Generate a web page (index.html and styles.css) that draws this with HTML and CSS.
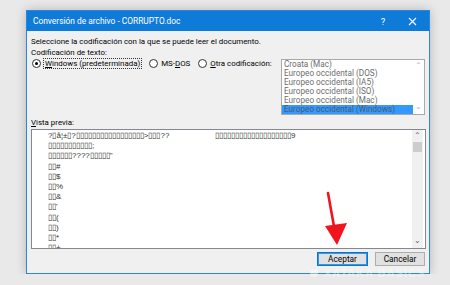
FILE: index.html
```html
<!DOCTYPE html>
<html lang="es">
<head>
	<meta charset="UTF-8">
	<title>Conversión de archivo</title>
	<link rel="stylesheet" href="styles.css">
</head>
<body>
<div class="dialog">
	<div class="titlebar">
		<span class="title">Conversión de archivo - CORRUPTO.doc</span>
		<span class="help">?</span>
		<span class="close">
			<svg width="9" height="9" viewBox="0 0 9 9"><path d="M1 1L8 8M8 1L1 8" stroke="#fff" stroke-width="1.1"/></svg>
		</span>
	</div>
	<div class="content">
		<p class="line">Seleccione la codificación con la que se puede leer el documento.</p>
		<p class="line">Codificación de texto:</p>
		<div class="encoding">
			<div class="options">
				<label class="radio"><span class="dot checked"></span><span class="focus"><u>W</u>indows (predeterminada)</span></label>
				<label class="radio"><span class="dot"></span>MS-<u>D</u>OS</label>
				<label class="radio"><span class="dot"></span><u>O</u>tra codificación:</label>
			</div>
			<div class="listbox">
				<ul>
					<li>Croata (Mac)</li>
					<li>Europeo occidental (DOS)</li>
					<li>Europeo occidental (IA5)</li>
					<li>Europeo occidental (ISO)</li>
					<li>Europeo occidental (Mac)</li>
					<li class="selected">Europeo occidental (Windows)</li>
				</ul>
				<div class="scroll small">
					<span class="arrow">&#8963;</span>
					<span class="arrow down">&#8964;</span>
				</div>
			</div>
		</div>
		<p class="line label"><u>V</u>ista previa:</p>
		<div class="preview">
			<div class="text">
				<div><span class="w1">?▯å¦±▯?▯▯▯▯▯▯▯▯▯▯▯▯▯▯▯▯▯>▯▯▯??</span>▯▯▯▯▯▯▯▯▯▯▯▯▯▯▯▯▯▯▯9</div>
				<div>▯▯▯▯▯▯▯▯▯▯▯;</div>
				<div>▯▯▯▯▯▯????▯▯▯▯▯"</div>
				<div>▯▯#</div>
				<div>▯▯$</div>
				<div>▯▯%</div>
				<div>▯▯&amp;</div>
				<div>▯▯'</div>
				<div>▯▯(</div>
				<div>▯▯)</div>
				<div>▯▯*</div>
				<div>▯▯+</div>
			</div>
			<div class="scroll">
				<span class="arrow">&#8963;</span>
				<span class="thumb"></span>
				<span class="arrow down">&#8964;</span>
			</div>
		</div>
		<div class="buttons">
			<button class="btn default">Aceptar</button>
			<button class="btn">Cancelar</button>
		</div>
	</div>
</div>
<svg class="pointer" width="30" height="60" viewBox="0 0 30 60">
	<path d="M8 3L15 42" stroke="#f0141e" stroke-width="2.6" stroke-linecap="round"/>
	<path d="M5 36L17 55L27 33Z" fill="#f0141e"/>
</svg>
<div class="watermark"><span class="logo"></span>XATAKA BASICS</div>
</body>
</html>
```
FILE: styles.css
```css
body{
	margin: 0;
	background: #e9e9e9;
	font-family: Roboto, sans-serif;
	font-size: 7.9px;
	color: #000;
}
.dialog{
	width: 402px;
	margin: 10px 0 0 26px;
	border: 1px solid #2b86d8;
	background: #f0f0f0;
	box-shadow: 0 0 10px rgba(0,0,0,0.22);
}
.titlebar{
	display: flex;
	align-items: center;
	height: 20px;
	background: #0f7bd8;
	color: #fff;
	font-size: 8.4px;
}
.title{
	flex: 1;
	padding-left: 6px;
}
.help{
	width: 28px;
	text-align: center;
	font-size: 9.5px;
}
.close{
	display: flex;
	justify-content: center;
	width: 30px;
	margin-right: 2px;
}
.content{
	padding: 5px 3px 7px 4px;
}
.line{
	margin: 0;
	line-height: 11px;
}
.encoding{
	display: flex;
	align-items: flex-start;
	justify-content: space-between;
	height: 57px;
}
.options{
	display: flex;
	min-width: 0;
}
.radio{
	display: flex;
	align-items: center;
	height: 11px;
	margin-right: 7px;
	white-space: nowrap;
}
.dot{
	position: relative;
	flex-shrink: 0;
	width: 7px;
	height: 7px;
	margin: 0 3px 0 1px;
	border: 1px solid #333;
	border-radius: 50%;
	background: #fff;
}
.dot.checked::after{
	content: "";
	position: absolute;
	left: 2px;
	top: 2px;
	width: 3px;
	height: 3px;
	border-radius: 50%;
	background: #000;
}
.focus{
	outline: 1px dotted #333;
	padding: 0 1px;
}
.listbox{
	display: flex;
	flex-shrink: 0;
	margin: 1px 1px 0 0;
	width: 142px;
	height: 54px;
	border: 1px solid #a9a9a9;
	background: #fff;
	overflow: hidden;
}
.listbox ul{
	flex: 1;
	margin: 0;
	padding: 0;
	list-style: none;
	color: #6d6d6d;
	font-size: 8.2px;
	white-space: nowrap;
	overflow: hidden;
}
.listbox li{
	height: 9px;
	line-height: 9px;
	padding-left: 2px;
}
.listbox li.selected{
	background: #3399ff;
	color: #4b5a6c;
}
.scroll{
	display: flex;
	flex-direction: column;
	align-items: center;
	flex-shrink: 0;
	width: 11px;
	background: #f0f0f0;
	color: #606060;
}
.scroll.small{
	background: #fff;
	color: #b0b0b0;
}
.arrow{
	height: 9px;
	line-height: 12px;
	font-size: 8px;
}
.arrow.down{
	margin-top: auto;
	line-height: 4px;
}
.thumb{
	width: 9px;
	height: 10px;
	margin-top: 3px;
	background: #cdcdcd;
}
.label{
	margin-top: 2px;
}
.preview{
	display: flex;
	height: 118px;
	margin-top: 1px;
	border: 1px solid #828790;
	background: #fff;
	padding-right: 2px;
}
.text{
	flex: 1;
	padding: 1px 0 0 16px;
	font-family: "Liberation Sans", sans-serif;
	font-size: 8px;
	line-height: 10.2px;
	color: #333;
	overflow: hidden;
	white-space: nowrap;
}
.w1{
	display: inline-block;
	width: 167px;
}
.buttons{
	display: flex;
	justify-content: flex-end;
	gap: 7px;
	margin-top: 3px;
	padding-right: 1px;
}
.btn{
	width: 50px;
	height: 14px;
	padding: 0;
	border: 1px solid #adadad;
	background: #e1e1e1;
	font-family: Roboto, sans-serif;
	font-size: 8.3px;
	line-height: 12px;
	color: #000;
}
.btn.default{
	width: 51px;
	border-color: #0078d7;
	box-shadow: inset 0 0 0 1px #3d95e0;
}
.pointer{
	position: absolute;
	left: 320px;
	top: 190px;
}
.watermark{
	position: absolute;
	left: 310px;
	top: 267px;
	display: flex;
	align-items: center;
	gap: 6px;
	font-family: "Liberation Sans", sans-serif;
	font-size: 11px;
	font-weight: bold;
	letter-spacing: 1px;
	color: rgba(255,255,255,0.4);
}
.logo{
	width: 8px;
	height: 8px;
	border-radius: 50%;
	background: rgba(255,255,255,0.45);
}
```
